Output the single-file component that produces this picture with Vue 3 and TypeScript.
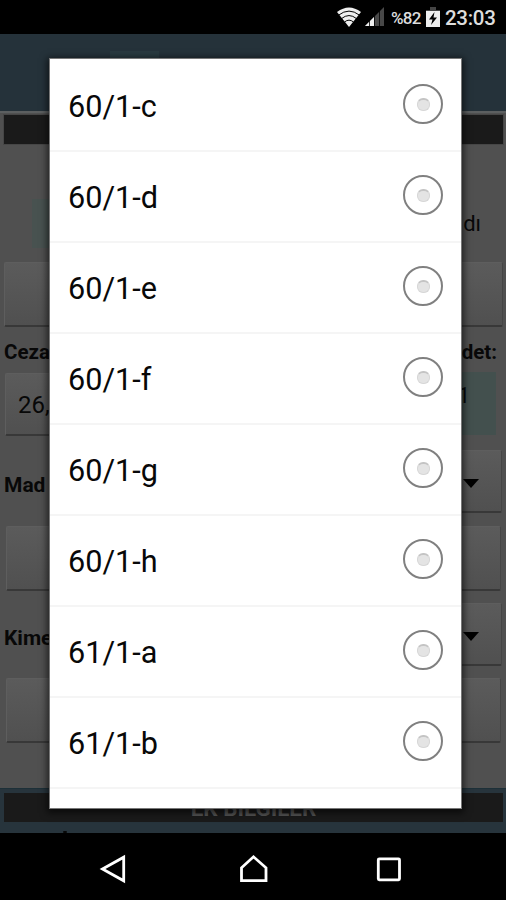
<script setup lang="ts">
const options: string[] = ['60/1-c', '60/1-d', '60/1-e', '60/1-f', '60/1-g', '60/1-h', '61/1-a', '61/1-b']
</script>

<template>
  <main class="screen">
    <header class="status">
      <svg class="wifi" viewBox="0 0 26 22">
        <path d="M1 6Q13-3 25 6L13 21Z" fill="#eee" />
        <path d="M2.5 9.2Q13 1 23.5 9.2M5.5 12.6Q13 6.5 20.5 12.6M8.5 16Q13 12.3 17.5 16" fill="none" stroke="#000" stroke-width="1" />
      </svg>
      <svg class="signal" viewBox="0 0 20 20">
        <path d="M0 19L19 0V19Z" fill="#484848" />
        <path d="M0 19L9 10V19Z" fill="#eee" />
        <path d="M4.5 14V19M9.5 7V19M14.5 2V19" stroke="#000" stroke-width=".8" />
      </svg>
      <span class="percent">%82</span>
      <svg class="battery" viewBox="0 0 14 20">
        <path d="M4 0H10V3H14V7H0V3H4Z" fill="#444" />
        <path d="M0 4H14V20H0Z" fill="#eee" />
        <path d="M8.5 5L3 12.5H6.5L5 18L11 10.5H7.5Z" fill="#000" />
      </svg>
      <time>23:03</time>
    </header>

    <section class="page">
      <div class="app-header"><div class="tab"></div></div>
      <div class="form">
        <div class="title-bar"></div>
        <div class="choices"><div class="choice-mark"></div><span>dı</span></div>
        <div class="field wide"></div>
        <div class="labels"><b>Ceza</b><b>Adet:</b></div>
        <div class="amounts"><div class="field amount">26,</div><div class="count">1</div></div>
        <div class="select-row"><b>Mad</b><div class="field select"><svg viewBox="0 0 16 9"><path d="M0 0H16L8 9Z" /></svg></div></div>
        <div class="field inset"></div>
        <div class="select-row second"><b>Kime</b><div class="field select"><svg viewBox="0 0 16 9"><path d="M0 0H16L8 9Z" /></svg></div></div>
        <div class="field inset last"></div>
      </div>
      <div class="extra"><div class="extra-title">EK BİLGİLER</div><i class="dot"></i></div>
    </section>

    <nav class="navigation">
      <svg viewBox="0 0 506 67" fill="none" stroke="#fff" stroke-width="2.8">
        <path d="M102.5 36L123.7 24.2V47.8Z" />
        <path d="M241.5 47.7V34.8L253.5 23.8L266 34.8V47.7Z" />
        <rect x="378.3" y="25.8" width="21.2" height="21" rx="1" />
      </svg>
    </nav>

    <section class="dialog" role="listbox">
      <div v-for="option in options" :key="option" class="option" role="option">
        <span>{{ option }}</span>
        <span class="radio"><i></i></span>
      </div>
    </section>
  </main>
</template>

<style>
body { margin: 0; background: #000; }
</style>

<style scoped>
* { box-sizing: border-box; }
.screen { position: relative; width: 506px; height: 900px; display: flex; flex-direction: column; overflow: hidden; background: #000; font-family: Roboto, sans-serif; color: #080808; }
.status { height: 34px; flex: none; display: flex; align-items: center; justify-content: flex-end; padding-right: 11px; color: #ddd; }
.wifi { width: 26px; height: 22px; margin: 0 3px 0 0; }
.signal { width: 20px; height: 20px; margin-right: 6px; }
.percent { width: 32px; font-size: 17px; font-weight: 500; letter-spacing: -.7px; margin-right: 3px; line-height: 34px; white-space: nowrap; padding-top: 2px; }
.battery { width: 14px; height: 20px; margin-right: 5px; }
time { width: 50px; font-size: 20.5px; font-weight: 500; letter-spacing: -.3px; line-height: 34px; padding-top: 1px; white-space: nowrap; }
.page { height: 799px; flex: none; display: flex; flex-direction: column; background: #505050; }
.app-header { height: 77px; background: #25323a; padding: 17px 0 0 110px; }
.tab { width: 49px; height: 50px; background: #293a40; }
.form { height: 677px; padding-top: 1px; display: flex; flex-direction: column; border-top: 2px solid #5c5f60; }
.title-bar { height: 29px; flex: none; margin: 1px 3px 0 4px; background: #1a1a1a; box-shadow: 0 0 0 1px #464646; }
.choices { height: 118px; flex: none; display: flex; align-items: flex-start; justify-content: space-between; padding: 55px 25px 0 32px; font-size: 22px; }
.choices span { line-height: 26px; padding-top: 12px; }
.choice-mark { width: 50px; height: 49px; background: #485250; }
.field { background: linear-gradient(#5b5b5b, #505050); border: 1px solid #5e5e5e; border-bottom: 2px solid #383838; border-right-color: #454545; border-radius: 2px; flex: none; }
.wide { height: 65px; margin: 0 3px 0 4px; }
.labels { height: 45px; flex: none; display: flex; justify-content: space-between; padding: 12px 9px 0 4px; font-size: 20.5px; line-height: 27px; }
.amounts { height: 64px; flex: none; display: flex; justify-content: space-between; padding: 0 10px 0 5px; }
.amount { width: 90px; height: 63px; margin-top: 1px; padding-left: 12px; font-size: 24px; line-height: 62px; }
.count { width: 70px; height: 63px; background: #43504e; padding: 10px 26px 0 0; text-align: right; font-size: 22px; line-height: 28px; }
.select-row { height: 62px; flex: none; margin: 14px 4px 0 4px; display: flex; justify-content: space-between; align-items: flex-start; font-size: 21px; line-height: 71px; }
.select { height: 63px; width: 110px; display: flex; justify-content: flex-end; align-items: center; padding-right: 22px; }
.select svg { width: 16px; height: 9px; margin-top: 4px; }
.inset { height: 65px; margin: 14px 5px 0 6px; }
.second { margin-top: 12px; }
.last { margin-top: 13px; }
.extra { height: 45px; background: #27343c; padding: 4px 3px 0 4px; border-top: 1px solid #1d3038; }
.extra-title { height: 29px; background: #1a1a1a; color: #555; text-align: center; font-size: 22.4px; font-weight: 700; line-height: 30px; }
.dot { display: block; width: 4px; height: 2px; margin: 9px 0 0 59px; background: #080808; border-radius: 2px; }
.navigation { height: 67px; flex: none; background: #000; }
.navigation svg { display: block; width: 506px; height: 67px; }
.dialog { position: absolute; left: 49px; top: 58px; width: 413px; height: 751px; overflow: hidden; background: #fff; border: 1px solid #777; box-shadow: 0 2px 7px 2px rgba(0, 0, 0, .6); color: #080808; padding-top: 2px; }
.option { height: 91px; display: flex; align-items: flex-start; justify-content: space-between; padding: 23px 18px 0; border-bottom: 2px solid #f5f5f5; font-size: 30.6px; line-height: 36px; }
.option > span:first-child { padding-top: 5px; }
.radio { width: 40px; height: 40px; display: flex; align-items: center; justify-content: center; border: 2px solid #808080; border-radius: 50%; }
.radio i { width: 13px; height: 13px; border-radius: 6px; background: #e4e4e4; border: 1px solid #d7d7d7; border-top: 2px solid #c4c4c4; }
</style>
